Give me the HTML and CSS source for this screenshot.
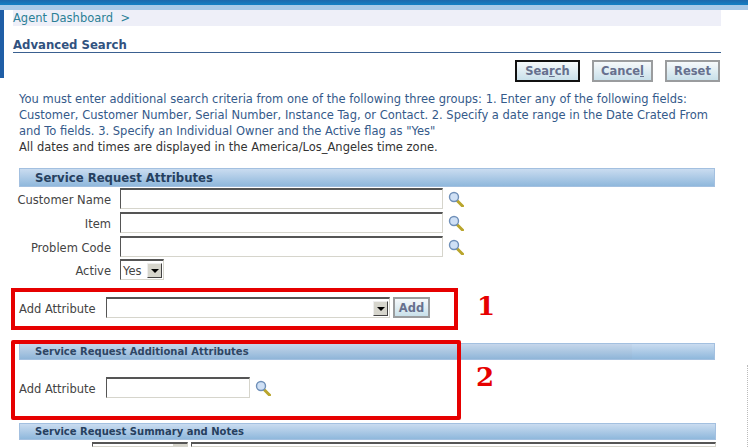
FILE: index.html
```html
<!DOCTYPE html>
<html lang="en">
<head>
    <meta charset="UTF-8">
    <title>Advanced Search</title>
    <link rel="stylesheet" href="styles.css">
</head>
<body>
    <svg class="icon-defs" width="0" height="0">
        <symbol id="lens" viewBox="0 0 16 16">
            <path d="M9 9.5 L14.5 15" stroke="#b9a52c" stroke-width="3" stroke-linecap="round"/>
            <circle cx="6" cy="6" r="4.5" fill="#cfe0f5" stroke="#6f8fb8" stroke-width="1.4"/>
        </symbol>
    </svg>

    <div class="top-bar"></div>
    <div class="side-strip"></div>

    <div class="page">
        <div class="breadcrumb">Agent Dashboard &nbsp;&gt;</div>
        <h1 class="page-title">Advanced Search</h1>

        <div class="actions">
            <button class="btn btn-default btn-search">Sea<u>r</u>ch</button>
            <button class="btn btn-cancel">Cance<u>l</u></button>
            <button class="btn btn-reset">Reset</button>
        </div>

        <div class="instructions">
            <p class="hint">You must enter additional search criteria from one of the following three groups: 1. Enter any of the following fields:<br>Customer, Customer Number, Serial Number, Instance Tag, or Contact. 2. Specify a date range in the Date Crated From<br>and To fields. 3. Specify an Individual Owner and the Active flag as "Yes"</p>
            <p class="note">All dates and times are displayed in the America/Los_Angeles time zone.</p>
        </div>

        <h2 class="section-header">Service Request Attributes</h2>
        <div class="form-rows">
            <div class="form-row">
                <label>Customer Name</label>
                <div class="field field-wide"></div>
                <svg class="lens"><use href="#lens"/></svg>
            </div>
            <div class="form-row">
                <label>Item</label>
                <div class="field field-wide"></div>
                <svg class="lens"><use href="#lens"/></svg>
            </div>
            <div class="form-row">
                <label>Problem Code</label>
                <div class="field field-wide"></div>
                <svg class="lens"><use href="#lens"/></svg>
            </div>
            <div class="form-row form-row-active">
                <label>Active</label>
                <div class="field select select-small"><span>Yes</span><i class="arrow"></i></div>
            </div>
        </div>

        <div class="add-row add-row-select">
            <span class="add-label">Add Attribute</span>
            <div class="field select select-large"><span></span><i class="arrow"></i></div>
            <button class="btn btn-add">Add</button>
        </div>

        <h2 class="section-header section-small section-additional">Service Request Additional Attributes</h2>
        <div class="add-row add-row-lov">
            <span class="add-label">Add Attribute</span>
            <div class="field field-short"></div>
            <svg class="lens"><use href="#lens"/></svg>
        </div>

        <h2 class="section-header section-small section-summary">Service Request Summary and Notes</h2>
        <div class="summary-row">
            <div class="field field-type"><i class="mini-btn"></i></div>
            <div class="field field-summary"></div>
        </div>
    </div>

    <!-- annotations drawn over the screenshot -->
    <div class="callout callout-one"></div>
    <div class="callout callout-two"></div>
    <span class="callout-num num-one">1</span>
    <span class="callout-num num-two">2</span>
    <div class="dotted-edge"></div>
</body>
</html>
```

FILE: styles.css
```css
* {
    margin: 0;
    padding: 0;
    box-sizing: border-box;
}

html, body {
    height: 447px;
    overflow: hidden;
}

body {
    position: relative;
    background: #fff;
    font-family: "DejaVu Sans", sans-serif;
    font-size: 11.5px;
    color: #444;
}

.icon-defs {
    position: absolute;
}

.top-bar {
    height: 10px;
    background: linear-gradient(to bottom, #1c68ac 0, #1480c4 5px, #a9c9e7 5px, #a9c9e7 10px);
}

.side-strip {
    position: absolute;
    left: 0;
    top: 10px;
    width: 4px;
    height: 68px;
    background: #1f5ea6;
}

.page {
    padding: 0 27px 0 13px;
}

.breadcrumb {
    height: 16px;
    background: #eeeff8;
    color: #2b7f96;
    line-height: 16px;
}

.page-title {
    height: 27px;
    padding-top: 12px;
    border-bottom: 1px solid #3a6090;
    color: #31527f;
    font-size: 11.7px;
    line-height: 14px;
}

.actions {
    display: flex;
    justify-content: flex-end;
    gap: 12px;
    padding: 7px 1px 0 0;
}

.btn {
    height: 22px;
    padding: 0;
    border: 2px solid #9a9c9e;
    background: linear-gradient(to bottom, #f6f9fb, #c9e0ea);
    color: #66708e;
    font-family: "DejaVu Sans", sans-serif;
    font-size: 11.5px;
    font-weight: bold;
}

.btn-default {
    border-color: #111;
}

.btn-search {
    width: 65px;
}

.btn-cancel {
    width: 61px;
}

.btn-reset {
    width: 55px;
}

.instructions {
    padding: 9px 0 0 6px;
    line-height: 16px;
    white-space: nowrap;
}

.hint {
    color: #355a8a;
}

.note {
    color: #333;
}

.section-header {
    height: 19px;
    margin: 13px 6px 0 6px;
    padding: 1px 0 0 15px;
    border: 1px solid #a3c0e0;
    background: linear-gradient(to bottom, #cadcf0, #8fb8dc);
    color: #26405f;
    font-size: 11.7px;
    line-height: 16px;
}

.section-small {
    height: 17px;
    font-size: 10px;
    line-height: 14px;
}

.section-additional {
    position: relative;
    margin-top: 25px;
}

/* the left part of this band is a little greyer in the original */
.section-additional::after {
    content: '';
    position: absolute;
    left: 0;
    top: 0;
    bottom: 0;
    width: 612px;
    background: rgba(150, 150, 170, 0.07);
}

.section-summary {
    margin: 25px 5px 0 6px;
}

.form-rows {
    display: flex;
    flex-direction: column;
    gap: 3px;
    padding-top: 1px;
}

.form-row {
    display: flex;
    align-items: center;
    height: 21px;
}

.form-row-active {
    margin-top: -1px;
}

.form-row label {
    width: 98px;
    padding-top: 2px;
    text-align: right;
    margin-right: 9px;
}

.field {
    height: 21px;
    background: #fff;
    border: 1px solid #d6d5cc;
    border-top: 2px solid #555;
    border-left-color: #555;
}

.field-wide {
    width: 323px;
}

.field-short {
    width: 144px;
}

.lens {
    width: 16px;
    height: 16px;
    margin-left: 5px;
}

.select {
    display: flex;
    align-items: center;
    justify-content: space-between;
    padding-left: 2px;
    padding-right: 1px;
}

.select span {
    padding-top: 1px;
}

.select-small {
    width: 44px;
}

.select-large {
    width: 284px;
}

.arrow {
    position: relative;
    display: block;
    width: 15px;
    height: 15px;
    background: #d6d5cc;
    border: 1px solid #444;
    border-top-color: #eee;
    border-left-color: #eee;
}

.arrow::after {
    content: '';
    position: absolute;
    left: 3px;
    top: 5px;
    border-left: 4px solid transparent;
    border-right: 4px solid transparent;
    border-top: 4px solid #000;
}

.add-row {
    display: flex;
    align-items: center;
    padding-left: 6px;
}

.add-label {
    width: 87px;
    padding-top: 2px;
}

.add-row-select {
    margin-top: 17px;
    height: 21px;
}

.btn-add {
    width: 37px;
    height: 21px;
    margin-left: 3px;
    font-size: 11.5px;
}

.add-row-lov {
    margin-top: 17px;
    height: 21px;
}

/* only the top edge of this row is still inside the window */
.summary-row {
    display: flex;
    height: 5px;
    margin: 2px 5px 0 79px;
    gap: 3px;
}

.field-type {
    position: relative;
    width: 96px;
    height: 5px;
}

.mini-btn {
    position: absolute;
    right: 0;
    top: 0;
    width: 14px;
    height: 3px;
    background: #d6d5cc;
}

.field-summary {
    flex: 1;
    height: 5px;
}

.callout {
    position: absolute;
    border: 4px solid #e60000;
}

.callout-one {
    left: 11px;
    top: 288px;
    width: 447px;
    height: 42px;
}

.callout-two {
    left: 11px;
    top: 340px;
    width: 450px;
    height: 80px;
    border-radius: 2px;
}

.callout-num {
    position: absolute;
    color: #e60000;
    font-family: "DejaVu Serif", serif;
    font-weight: bold;
    font-size: 26px;
    line-height: 30px;
}

.num-one {
    left: 477px;
    top: 291px;
}

.num-two {
    left: 476px;
    top: 362px;
}

.dotted-edge {
    position: absolute;
    left: 747px;
    top: 365px;
    height: 82px;
    border-left: 1px dotted #bbb;
}
```
